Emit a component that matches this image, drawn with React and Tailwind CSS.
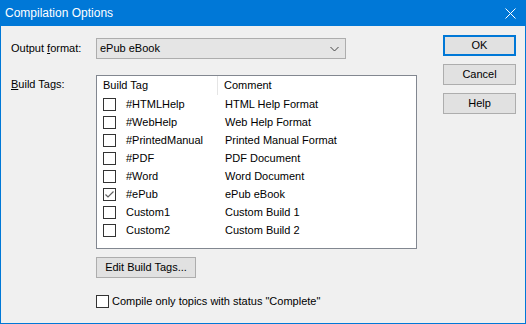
import React from 'react';

const tags = [
  { tag: '#HTMLHelp', comment: 'HTML Help Format', checked: false },
  { tag: '#WebHelp', comment: 'Web Help Format', checked: false },
  { tag: '#PrintedManual', comment: 'Printed Manual Format', checked: false },
  { tag: '#PDF', comment: 'PDF Document', checked: false },
  { tag: '#Word', comment: 'Word Document', checked: false },
  { tag: '#ePub', comment: 'ePub eBook', checked: true },
  { tag: 'Custom1', comment: 'Custom Build 1', checked: false },
  { tag: 'Custom2', comment: 'Custom Build 2', checked: false },
];

// small square checkbox, win10 style
function Box({ checked }) {
  return (
    <div className="w-[13px] h-[13px] border border-[#333333] bg-white flex items-center justify-center shrink-0">
      {checked && (
        <svg width="11" height="11" viewBox="0 0 11 11">
          <polyline points="1.5,5.5 4,8 9.5,2.5" fill="none" stroke="#606060" strokeWidth="1.2" />
        </svg>
      )}
    </div>
  );
}

function Button({ children, primary }) {
  return (
    <div
      className={
        'w-[73px] h-[21px] bg-[#e1e1e1] flex items-center justify-center ' +
        (primary ? 'border-2 border-[#0078d7]' : 'border border-[#adadad]')
      }
    >
      {children}
    </div>
  );
}

export default function App() {
  return (
    <div
      className="w-[526px] h-[324px] bg-[#f0f0f0] border-x border-b border-[#0078d7] flex flex-col text-[11px] text-black leading-none"
      style={{ fontFamily: '"Liberation Sans", Arial, sans-serif' }}
    >
      {/* title bar */}
      <div className="h-[26px] bg-[#0078d7] flex items-center justify-between pl-[4px] pr-[9px] shrink-0">
        <span className="text-white text-[12px]">Compilation Options</span>
        <svg width="11" height="11" viewBox="0 0 11 11">
          <path d="M0.5 0.5 L10.5 10.5 M10.5 0.5 L0.5 10.5" stroke="white" strokeWidth="1" />
        </svg>
      </div>

      <div className="flex flex-1">
        {/* left part */}
        <div className="flex flex-col pl-[10px] pt-[12px]">
          <div className="flex items-center h-[21px]">
            <span className="w-[85px]">
              Output <span className="underline">f</span>ormat:
            </span>
            <div className="w-[250px] h-[21px] border border-[#adadad] bg-[#e5e5e5] flex items-center justify-between pl-[3px] pr-[6px]">
              <span>ePub eBook</span>
              <svg width="9" height="6" viewBox="0 0 9 6">
                <polyline points="0.5,1 4.5,5 8.5,1" fill="none" stroke="#444444" strokeWidth="1" />
              </svg>
            </div>
          </div>

          <div className="flex mt-[16px]">
            <span className="w-[85px] pt-[4px]">
              <span className="underline">B</span>uild Tags:
            </span>
            <div className="w-[321px] h-[174px] border border-[#828790] bg-white">
              <div className="flex h-[19px] items-center">
                <div className="w-[121px] pl-[6px] h-full flex items-center border-r border-[#e5e5e5]">Build Tag</div>
                <div className="pl-[6px]">Comment</div>
              </div>
              {tags.map((t) => (
                <div key={t.tag} className="flex h-[18px] items-center">
                  <div className="w-[122px] pl-[6px] flex items-center gap-[10px]">
                    <Box checked={t.checked} />
                    <span>{t.tag}</span>
                  </div>
                  <div className="pl-[6px]">{t.comment}</div>
                </div>
              ))}
            </div>
          </div>

          <div className="ml-[85px] mt-[8px] w-[100px] h-[21px] bg-[#e1e1e1] border border-[#adadad] flex items-center justify-center">
            Edit Build Tags...
          </div>

          <div className="ml-[85px] mt-[17px] flex items-center gap-[3px]">
            <Box checked={false} />
            <span>Compile only topics with status "Complete"</span>
          </div>
        </div>

        {/* right buttons */}
        <div className="ml-auto pr-[9px] pt-[9px] flex flex-col gap-[8px]">
          <Button primary>OK</Button>
          <Button>Cancel</Button>
          <Button>Help</Button>
        </div>
      </div>
    </div>
  );
}
